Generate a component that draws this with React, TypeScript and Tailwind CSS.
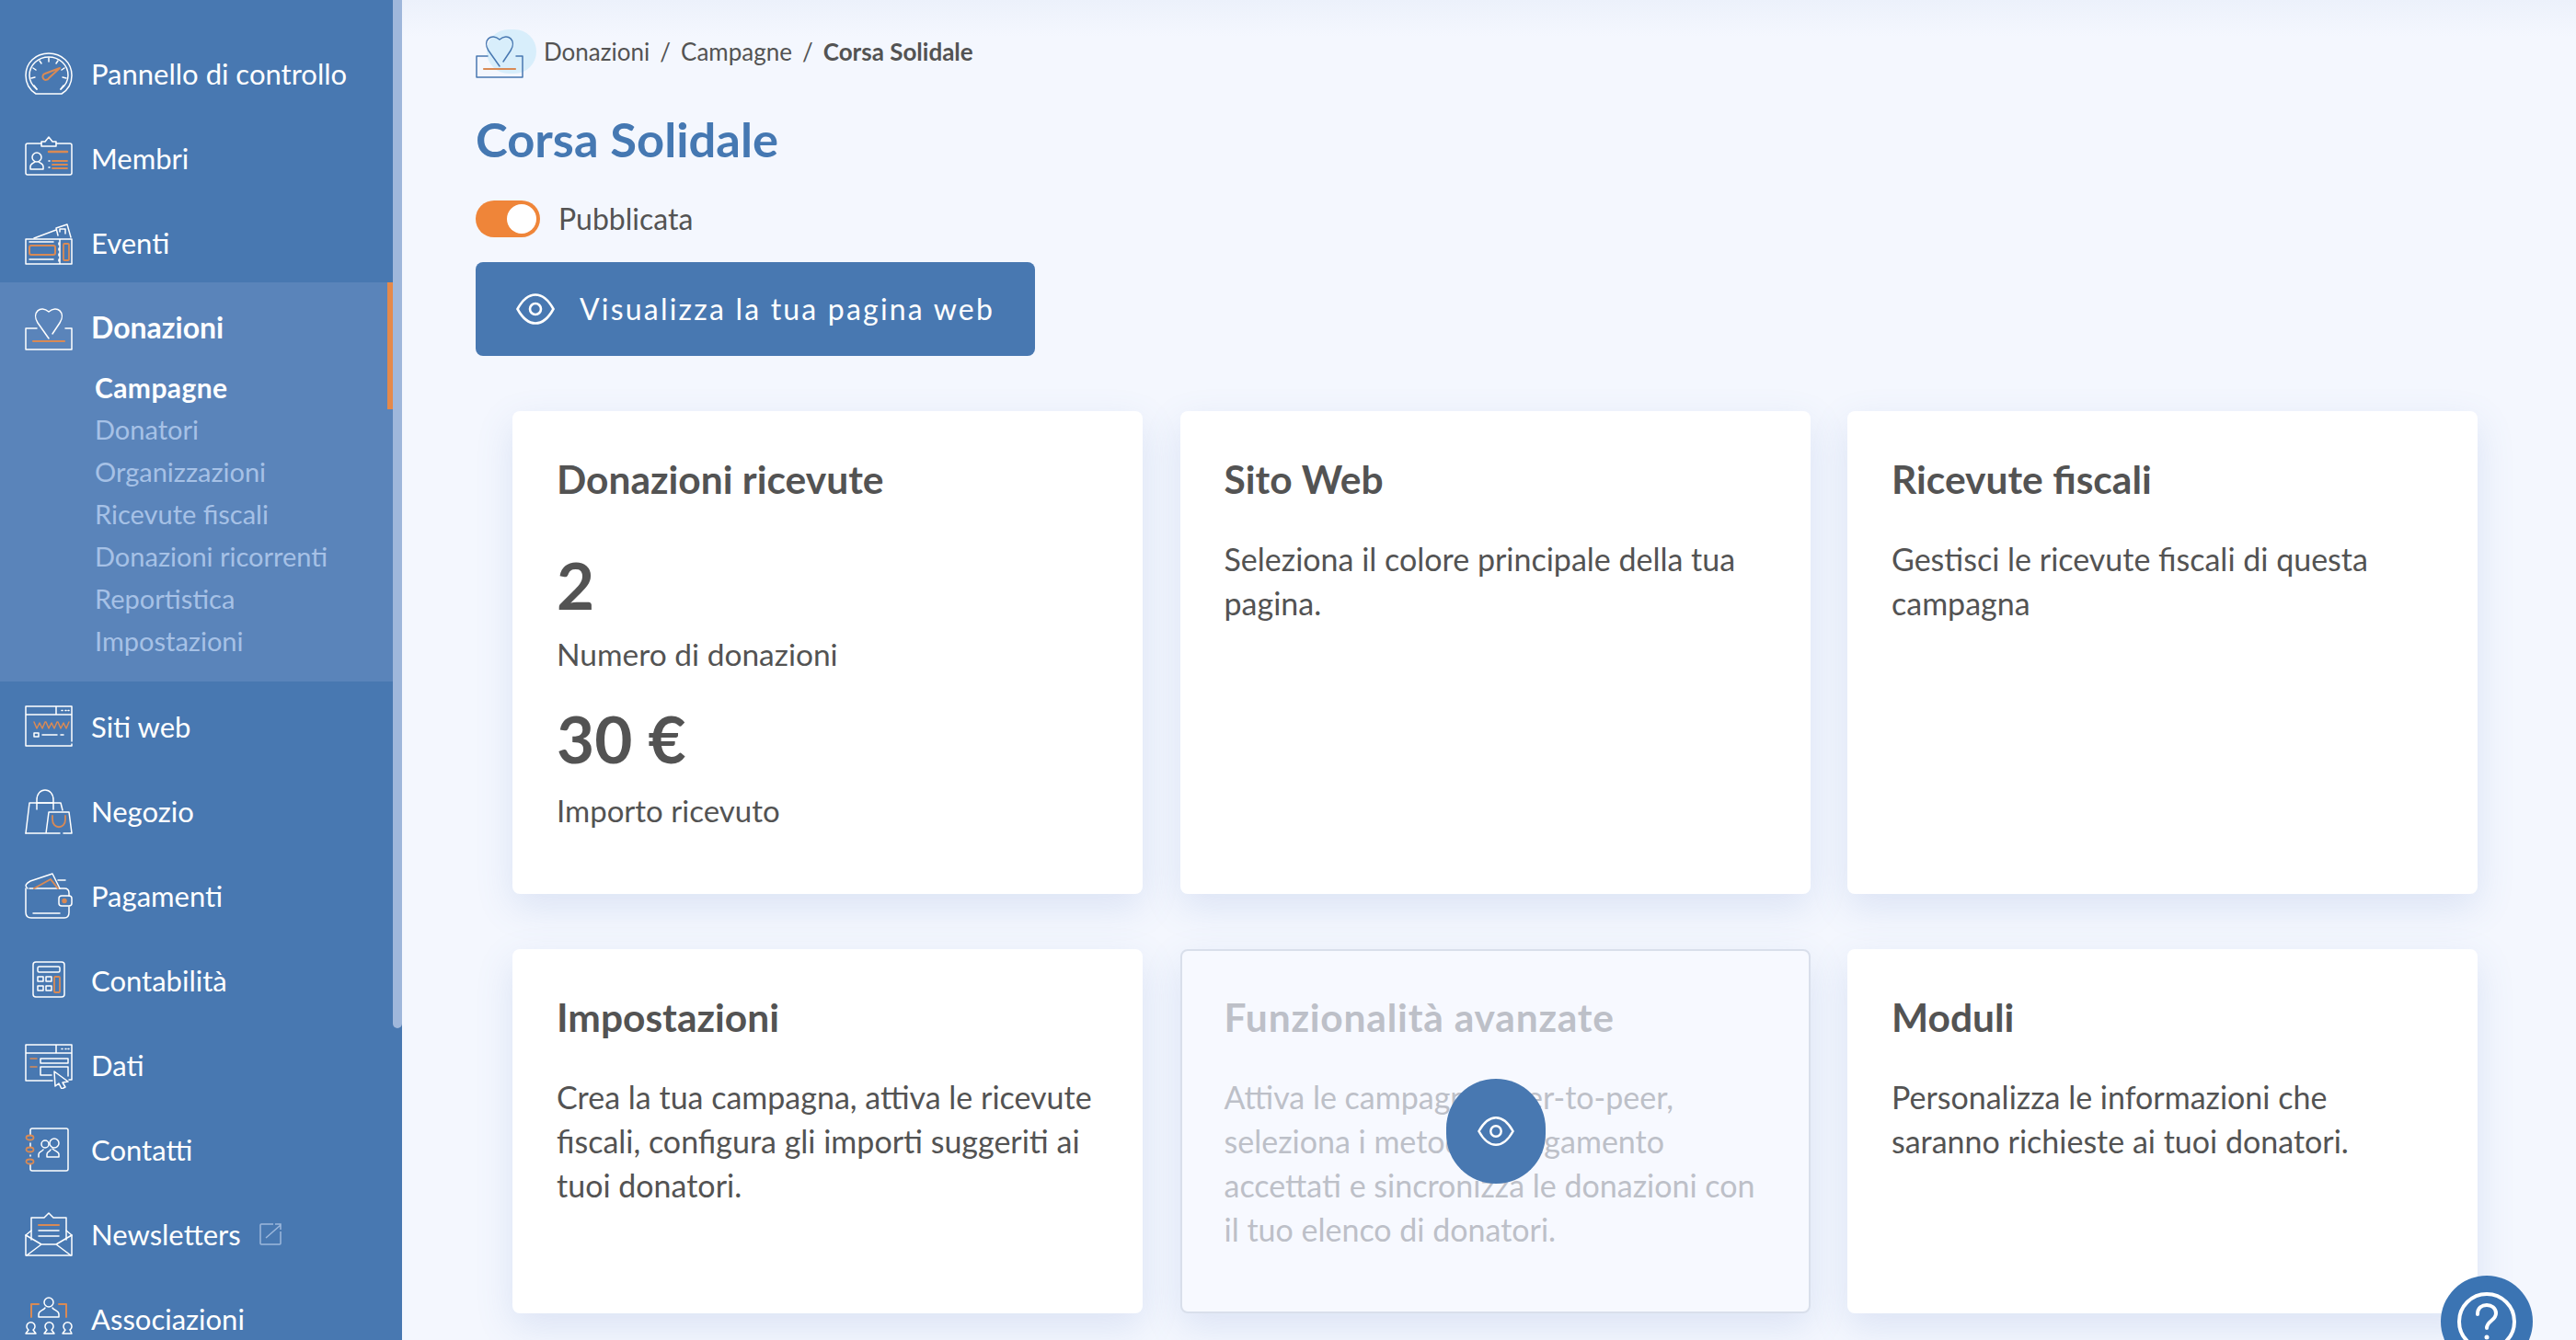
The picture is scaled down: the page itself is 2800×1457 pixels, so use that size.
import React from 'react';

const OR = '#d98a55';

const Svg = ({ children, className = 'w-[52px] h-[52px]' }: { children: React.ReactNode; className?: string }) => (
  <svg viewBox="0 0 52 52" fill="none" stroke="currentColor" strokeWidth="1.5" strokeLinecap="round" strokeLinejoin="round" className={`shrink-0 ${className}`}>
    {children}
  </svg>
);

const GaugeIcon = () => (
  <Svg>
    <path d="M12 48C4 43 1 35 1 28C1 14 12 4 26 4S51 14 51 28C51 35 48 43 40 48Z" />
    <path d="M13 43C8 39 5 34 5 28C5 16 15 8 26 8S47 16 47 28C47 34 44 39 39 43" />
    <path d="M13 43L10 39M7 31L11 30M9 20L12 22M16 12L18 15M26 9V13M36 12L34 15M43 20L40 22M45 31L41 30M39 43L42 39" />
    <path d="M22 26L38 20L26 31A3.5 3.5 0 1 1 22 26Z" stroke={OR} strokeWidth="2" />
  </Svg>
);

const MemberIcon = () => (
  <Svg>
    <path d="M18 10H3Q1 10 1 12V42Q1 44 3 44H49Q51 44 51 42V12Q51 10 49 10H34" />
    <path d="M18 13V8H22L26 3L30 8H34V13Z" />
    <circle cx="13" cy="25" r="5" />
    <path d="M6 38V35C6 32 10 31 11 30M20 38V35C20 32 16 31 15 30M6 38H20" />
    <path d="M26 19H46" stroke={OR} strokeWidth="2.5" />
    <path d="M30 29H46M30 33H46M30 37H46" stroke={OR} strokeWidth="1.8" />
    <path d="M26 29H27M26 36H27" />
  </Svg>
);

const TicketIcon = () => (
  <Svg>
    <path d="M1 22H38V49H1ZM38 22H51V49H38" />
    <path d="M10 21L34 12M36 18L34 10L46 6L50 20" />
    <path d="M38 14V11H44V16" />
    <rect x="5" y="29" width="28" height="10" rx="2" stroke={OR} strokeWidth="2" />
    <rect x="42" y="27" width="6" height="18" rx="1" stroke={OR} strokeWidth="1.8" />
    <path d="M5 25H31M5 44H31" />
    <path d="M37 26V46" strokeDasharray="2 4" />
  </Svg>
);

const HeartIcon = () => (
  <Svg>
    <path d="M13 27H1V50H51V27H44" />
    <path d="M26 38L14 21C7 10 17 1 26 9C35 1 45 10 38 21L30 33" />
    <path d="M9 41H43" stroke={OR} strokeWidth="2.2" />
  </Svg>
);

const WwwIcon = () => (
  <Svg>
    <path d="M1 4H51V42M51 45V47H1V4M1 13H51M34 4V13" />
    <path d="M40 8.5H41M44 8.5H45M47 8.5H48" />
    <path d="M11 21L14 28L17 22L20 28L23 21M24 21L27 28L30 22L33 28L36 21M37 21L40 28L43 22L46 28L49 21" stroke={OR} transform="translate(-1 0)" />
    <rect x="10" y="33" width="5" height="4" />
    <path d="M19 35H35M39 35H42" />
  </Svg>
);

const ShopIcon = () => (
  <Svg>
    <path d="M1 50L5 17H39L41 25" />
    <path d="M13 24V14C13 7 17 3 22 3S31 7 31 14V24" />
    <path d="M13 17H31" />
    <path d="M22 50H1M23 50L26 27H48L51 50H42M38 50H23" />
    <path d="M30 31V35C30 46 44 46 44 35V31" stroke={OR} strokeWidth="1.8" />
  </Svg>
);

const WalletIcon = () => (
  <Svg>
    <path d="M1 18V44Q1 50 7 50H43Q48 50 48 44V38M48 26V23Q48 18 43 18H5" />
    <path d="M3 18C-1 15 2 12 6 10L30 2L38 18" />
    <path d="M10 18L28 8L36 18" stroke={OR} strokeWidth="2" />
    <path d="M36 9H44" />
    <rect x="37" y="26" width="14" height="11" rx="3" />
    <circle cx="43" cy="31.5" r="2" fill={OR} stroke={OR} />
    <path d="M9 45H38" />
  </Svg>
);

const CalcIcon = () => (
  <Svg>
    <rect x="9" y="6" width="34" height="38" rx="3" />
    <rect x="14" y="11" width="24" height="6" rx="1.5" />
    <rect x="14" y="22" width="6" height="5" />
    <rect x="23" y="22" width="6" height="5" />
    <rect x="14" y="32" width="6" height="5" />
    <rect x="23" y="32" width="6" height="5" />
    <rect x="32" y="22" width="6" height="17" rx="1" stroke={OR} strokeWidth="1.8" />
  </Svg>
);

const DataIcon = () => (
  <Svg>
    <path d="M30 43H1V4H51V42H48M1 13H51M34 4V13" />
    <path d="M40 8.5H41M44 8.5H45M47 8.5H48" />
    <path d="M6 19H13M6 28H13" stroke={OR} />
    <path d="M17 19H47V24H17ZM29 37H17V28H47V38" />
    <path d="M32 33L47 44L41 45L44 50L40 52L37 46L33 49Z" />
  </Svg>
);

const ContactIcon = () => (
  <Svg>
    <path d="M6 10V5Q6 3 8 3H45Q47 3 47 5V47Q47 49 45 49H8Q6 49 6 47V42M6 19V23M6 32V33" />
    <ellipse cx="5.5" cy="13" rx="4" ry="2.5" stroke={OR} strokeWidth="1.8" />
    <ellipse cx="5.5" cy="26" rx="4" ry="2.5" stroke={OR} strokeWidth="1.8" />
    <ellipse cx="5.5" cy="39" rx="4" ry="2.5" stroke={OR} strokeWidth="1.8" />
    <circle cx="22" cy="20" r="4" />
    <circle cx="32" cy="19" r="5" />
    <path d="M15 34V31C15 28 19 28 20 26M24 34H37V31C37 28 33 28 30 25M24 34V31C24 28 28 28 28 26" />
  </Svg>
);

const MailIcon = () => (
  <Svg>
    <path d="M7 22L1 27V49H51V27L45 22" />
    <path d="M7 32V8H21L26 3L31 8H45V32" />
    <path d="M1 27L18 37M51 27L34 37M2 49L18 37H34L50 49" />
    <path d="M15 16H37" stroke={OR} strokeWidth="2" />
    <path d="M15 22H37M15 28H37" />
  </Svg>
);

const AssocIcon = () => (
  <Svg>
    <circle cx="26" cy="8" r="5" />
    <path d="M15 24V21C15 17 20 17 22 14M37 24V21C37 17 32 17 30 14M15 24H37" />
    <path d="M15 10H7V24M37 10H45V24" stroke={OR} strokeWidth="2" />
    <path d="M9 38A4.5 4.5 0 1 0 4 38M4 38L1 42H12L9 38M29 38A4.5 4.5 0 1 0 24 38M24 38L21 42H32L29 38M49 38A4.5 4.5 0 1 0 44 38M44 38L41 42H51L49 38" />
  </Svg>
);

const EyeIcon = ({ className }: { className: string }) => (
  <svg viewBox="0 0 42 42" fill="none" stroke="currentColor" strokeWidth="2.6" className={className}>
    <path d="M1.5 21C7 11 14 5.5 21 5.5S35 11 40.5 21C35 31 28 36.5 21 36.5S7 31 1.5 21Z" />
    <circle cx="21" cy="21" r="6" />
  </svg>
);

// small outbound-link mark next to Newsletters
const OutIcon = () => (
  <svg viewBox="0 0 24 24" fill="none" stroke="#9db8dc" strokeWidth="1.5" className="w-[24px] h-[24px] shrink-0">
    <path d="M15 1H2Q1 1 1 2V22Q1 23 2 23H22Q23 23 23 22V9" />
    <path d="M7 16L23 2M17 1H23V7" />
  </svg>
);

const NavRow = ({ icon, label, bold, extra }: { icon: React.ReactNode; label: string; bold?: boolean; extra?: React.ReactNode }) => (
  <div className={`h-[92px] flex items-center gap-[20px] pl-[27px] text-white ${bold ? 'font-bold' : ''}`}>
    {icon}
    <span className={`${bold ? 'text-[32px]' : 'text-[31px]'} leading-none whitespace-nowrap`}>{label}</span>
    {extra}
  </div>
);

const subItems = ['Donatori', 'Organizzazioni', 'Ricevute fiscali', 'Donazioni ricorrenti', 'Reportistica', 'Impostazioni'];

const Sidebar = () => (
  <aside className="w-[437px] h-[1457px] shrink-0 bg-[#4878b1] flex overflow-hidden">
    <nav className="w-[427px] shrink-0 pt-[34px]">
      <NavRow icon={<GaugeIcon />} label="Pannello di controllo" />
      <NavRow icon={<MemberIcon />} label="Membri" />
      <NavRow icon={<TicketIcon />} label="Eventi" />
      <div className="relative h-[434px] bg-[#5a84ba] mt-[-3px] pt-[3px]">
        <div className="absolute right-0 top-0 w-[6px] h-[138px] bg-[#e5894a]" />
        <NavRow icon={<HeartIcon />} label="Donazioni" bold />
        <ul className="pl-[103px] text-[29px] leading-[46px] mt-[-4px] text-[#a6c1e6]">
          <li className="font-bold text-[30px] tracking-[0.4px] text-white">Campagne</li>
          {subItems.map((s) => (
            <li key={s}>{s}</li>
          ))}
        </ul>
      </div>
      <div className="mt-[3px]">
        <NavRow icon={<WwwIcon />} label="Siti web" />
        <NavRow icon={<ShopIcon />} label="Negozio" />
        <NavRow icon={<WalletIcon />} label="Pagamenti" />
        <NavRow icon={<CalcIcon />} label="Contabilità" />
        <NavRow icon={<DataIcon />} label="Dati" />
        <NavRow icon={<ContactIcon />} label="Contatti" />
        <NavRow icon={<MailIcon />} label="Newsletters" extra={<OutIcon />} />
        <NavRow icon={<AssocIcon />} label="Associazioni" />
      </div>
    </nav>
    <div className="w-[10px] h-[1118px] bg-[#9fb7db] rounded-b-[6px]" />
  </aside>
);

const Card = ({ title, children, muted }: { title: string; children?: React.ReactNode; muted?: boolean }) => (
  <div
    className={`relative rounded-[8px] whitespace-nowrap shadow-[0_14px_40px_rgba(90,125,190,0.16)] ${
      muted ? 'px-[46px] pt-[44px] bg-[#f7f9ff] border-2 border-[#d9dfeb] text-[#bdc0c8]' : 'px-[48px] pt-[46px] bg-white text-[#535353]'
    }`}
  >
    <h2 className={`text-[42.5px] leading-[56px] font-bold ${muted ? 'tracking-[0.8px]' : ''}`}>{title}</h2>
    {children}
  </div>
);

const Body = ({ children }: { children: React.ReactNode }) => <p className="mt-[35px] text-[34px] leading-[48px]">{children}</p>;

export default function App() {
  return (
    <div className="relative w-[2800px] h-[1457px] overflow-hidden flex bg-[#f4f7fe] font-['Lato','Liberation_Sans',sans-serif]">
      <Sidebar />
      <main className="flex-1 pl-[80px] bg-[linear-gradient(180deg,#ecf1fb_0px,#f4f7fe_40px)] text-[#535353]">
        <div className="h-[112px] flex items-center">
          <div className="relative w-[66px] h-[48px] text-[#4878b1]">
            <div className="absolute left-[12px] top-0 w-[54px] h-[48px] rounded-full bg-[#d8eefb]" />
            <div className="absolute left-0 top-[2px]">
              <HeartIcon />
            </div>
          </div>
          <div className="ml-[8px] text-[26px] whitespace-nowrap flex gap-[11px]">
            <span>Donazioni</span>
            <span>/</span>
            <span>Campagne</span>
            <span>/</span>
            <span className="font-bold">Corsa Solidale</span>
          </div>
        </div>
        <h1 className="text-[52.5px] leading-[80px] font-bold text-[#4578b2] -mt-[1px]">Corsa Solidale</h1>
        <div className="mt-[27px] flex items-center gap-[20px]">
          <div className="w-[70px] h-[40px] rounded-full bg-[#ef8539] flex items-center justify-end pr-[4px]">
            <div className="w-[32px] h-[32px] rounded-full bg-white" />
          </div>
          <span className="text-[32px] leading-[40px]">Pubblicata</span>
        </div>
        <button className="mt-[27px] w-[608px] h-[102px] rounded-[8px] bg-[#4878b1] text-white flex items-center gap-[27px] pl-[44px]">
          <EyeIcon className="w-[42px] h-[42px]" />
          <span className="text-[32px] tracking-[2.2px] whitespace-nowrap">Visualizza la tua pagina web</span>
        </button>
        <div className="ml-[40px] mt-[60px] grid grid-cols-[685px_685px_685px] grid-rows-[525px_396px] gap-x-[40.5px] gap-y-[60px]">
          <Card title="Donazioni ricevute">
            <div className="mt-[45px] text-[71px] leading-[84px] font-bold">2</div>
            <div className="mt-[9px] text-[33.5px] leading-[48px]">Numero di donazioni</div>
            <div className="mt-[26px] text-[71px] leading-[84px] font-bold">30 €</div>
            <div className="mt-[12px] text-[33px] leading-[48px]">Importo ricevuto</div>
          </Card>
          <Card title="Sito Web">
            <Body>
              Seleziona il colore principale della tua
              <br />
              pagina.
            </Body>
          </Card>
          <Card title="Ricevute fiscali">
            <Body>
              Gestisci le ricevute fiscali di questa
              <br />
              campagna
            </Body>
          </Card>
          <Card title="Impostazioni">
            <Body>
              Crea la tua campagna, attiva le ricevute
              <br />
              fiscali, configura gli importi suggeriti ai
              <br />
              tuoi donatori.
            </Body>
          </Card>
          <Card title="Funzionalità avanzate" muted>
            <Body>
              Attiva le campagne peer-to-peer,
              <br />
              seleziona i metodi di pagamento
              <br />
              accettati e sincronizza le donazioni con
              <br />
              il tuo elenco di donatori.
            </Body>
            <div className="absolute left-[287px] top-[139px] w-[108px] h-[114px] rounded-full bg-[#4878b1] text-white flex items-center justify-center">
              <EyeIcon className="w-[40px] h-[40px]" />
            </div>
          </Card>
          <Card title="Moduli">
            <Body>
              Personalizza le informazioni che
              <br />
              saranno richieste ai tuoi donatori.
            </Body>
          </Card>
        </div>
      </main>
      <div className="absolute left-[2653px] top-[1387px] w-[100px] h-[100px] rounded-full bg-[#3b74b3] text-white flex items-start justify-center pt-[18px]">
        <svg viewBox="0 0 64 64" fill="none" stroke="currentColor" strokeWidth="4" strokeLinecap="round" className="w-[64px] h-[64px]">
          <circle cx="32" cy="32" r="30" />
          <path d="M22 24C22 17 27 14 32 14S42 17 42 23C42 31 32 31 32 39" />
          <circle cx="32" cy="49" r="2.5" fill="currentColor" stroke="none" />
        </svg>
      </div>
    </div>
  );
}
